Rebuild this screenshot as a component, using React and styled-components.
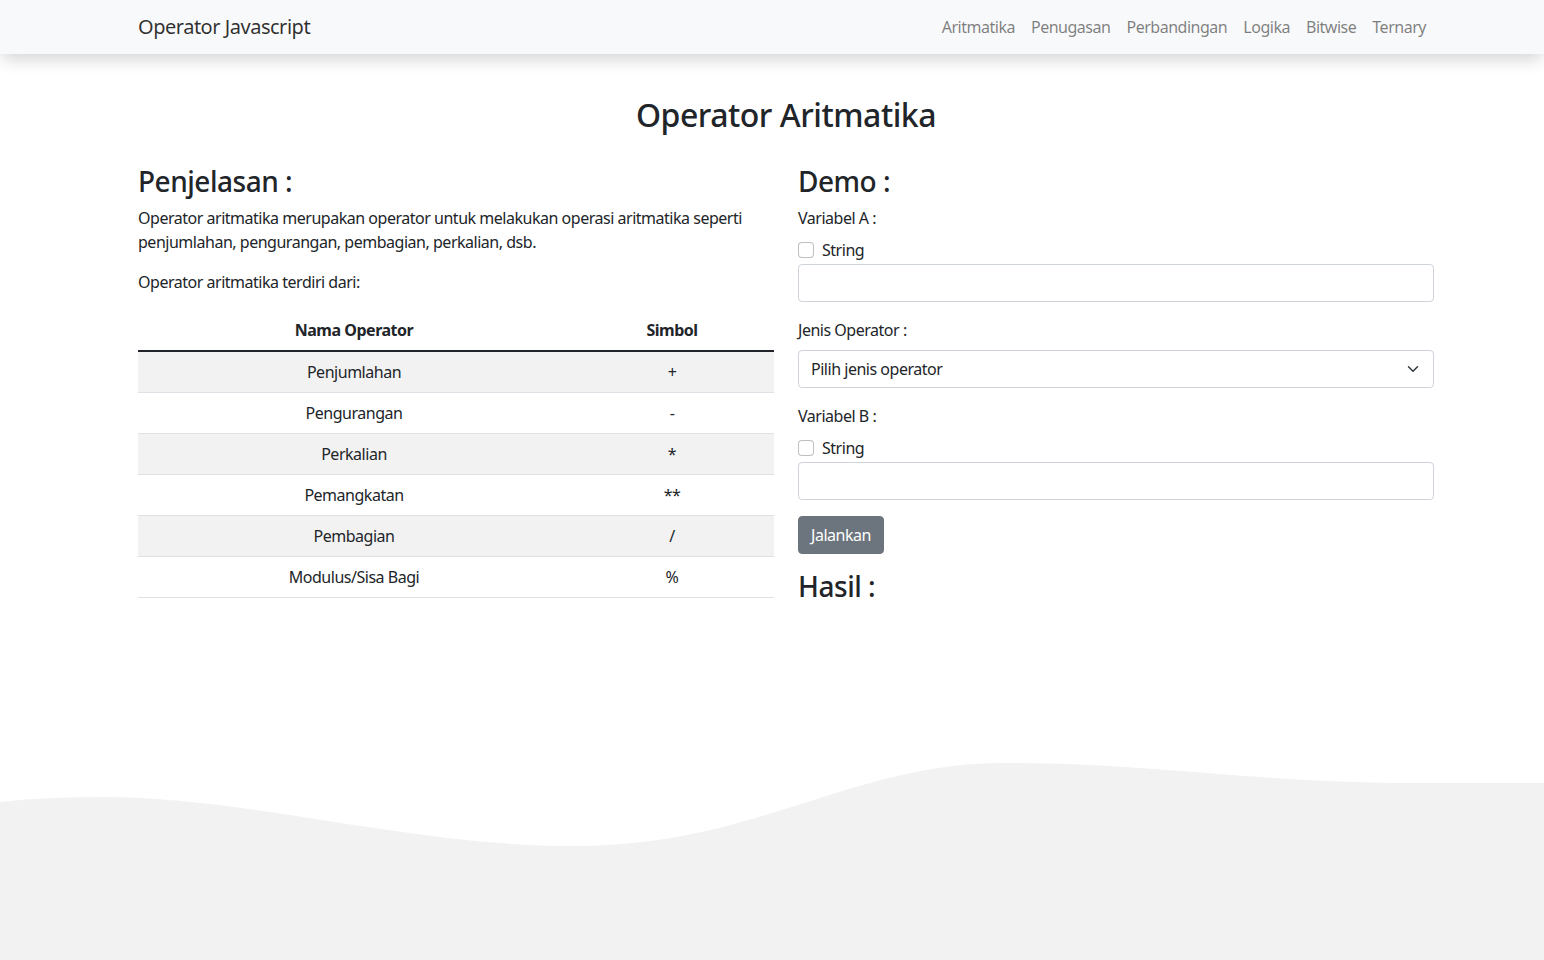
import React from "react";
import styled, { createGlobalStyle } from "styled-components";

const GlobalStyle = createGlobalStyle`
  * {
    box-sizing: border-box;
  }
  body {
    margin: 0;
    font-family: "Noto Sans", "Open Sans", sans-serif;
    font-size: 16px;
    line-height: 1.5;
    letter-spacing: -0.03em;
    color: #212529;
    background-color: #fff;
  }
`;

const Page = styled.div`
  min-height: 100vh;
  display: flex;
  flex-direction: column;
`;

const Container = styled.div`
  width: 1320px;
  padding: 0 12px;
  margin-left: calc(50% - 646px);
`;

// Navbar
const Navbar = styled.nav`
  height: 54px;
  background-color: #f8f9fa;
  box-shadow: 0 8px 16px -2px rgba(0, 0, 0, 0.16);
  position: relative;
  z-index: 1;
`;

const NavInner = styled(Container)`
  height: 100%;
  display: flex;
  align-items: center;
  justify-content: space-between;
`;

const Brand = styled.a`
  font-size: 20px;
  color: rgba(0, 0, 0, 0.82);
  text-decoration: none;
`;

const NavList = styled.ul`
  display: flex;
  list-style: none;
  margin: 0;
  padding: 0;
`;

const NavLink = styled.a`
  display: block;
  padding: 8px;
  font-size: 16px;
  color: rgba(0, 0, 0, 0.5);
  text-decoration: none;
`;

// Content
const Main = styled.main`
  flex: 1;
`;

const PageTitle = styled.h2`
  margin: 42px 0 31px;
  text-align: center;
  font-size: 32px;
  font-weight: 500;
  line-height: 1.2;
`;

const Row = styled.div`
  display: grid;
  grid-template-columns: 1fr 1fr;
  column-gap: 24px;
`;

const Column = styled.section``;

const Heading = styled.h3`
  margin: ${(props) => (props.top ? "16px" : "0")} 0 7px;
  font-size: 28px;
  font-weight: 500;
  line-height: 1.2;
`;

const Paragraph = styled.p`
  margin: 0 0 16px;
`;

const Table = styled.table`
  width: 100%;
  border-collapse: collapse;
  text-align: center;
`;

const HeadCell = styled.th`
  width: ${(props) => props.w};
  padding: 8px;
  font-weight: 700;
  border-bottom: 2px solid #212529;
`;

const BodyRow = styled.tr`
  &:nth-child(odd) {
    background-color: #f2f2f2;
  }
`;

const BodyCell = styled.td`
  padding: 8px;
  border-bottom: 1px solid #dee2e6;
`;

const Label = styled.label`
  display: block;
  margin-bottom: 8px;
`;

const Field = styled.div`
  margin-bottom: 16px;
`;

const Check = styled.label`
  display: flex;
  align-items: center;
  gap: 8px;
  min-height: 24px;
  margin-bottom: 2px;
`;

const CheckBox = styled.input`
  appearance: none;
  width: 16px;
  height: 16px;
  margin: 0;
  border: 1px solid rgba(0, 0, 0, 0.25);
  border-radius: 4px;
  background-color: #fff;
`;

const TextInput = styled.input`
  display: block;
  width: 100%;
  height: 38px;
  padding: 6px 12px;
  font: inherit;
  color: #212529;
  border: 1px solid #ced4da;
  border-radius: 4px;
  outline: none;
`;

const Select = styled.select`
  display: block;
  width: 100%;
  height: 38px;
  padding: 6px 36px 6px 12px;
  font: inherit;
  letter-spacing: inherit;
  color: #212529;
  border: 1px solid #ced4da;
  border-radius: 4px;
  appearance: none;
  outline: none;
  background-color: #fff;
  background-image: url("data:image/svg+xml,%3csvg xmlns='http://www.w3.org/2000/svg' viewBox='0 0 16 16'%3e%3cpath fill='none' stroke='%23343a40' stroke-linecap='round' stroke-linejoin='round' stroke-width='2' d='M2 5l6 6 6-6'/%3e%3c/svg%3e");
  background-repeat: no-repeat;
  background-position: right 12px center;
  background-size: 16px 12px;
`;

const Button = styled.button`
  padding: 6px 12px;
  height: 38px;
  font: inherit;
  letter-spacing: inherit;
  color: #fff;
  background-color: #6c757d;
  border: 1px solid #6c757d;
  border-radius: 4px;
`;

// Wave footer
const Wave = styled.svg`
  display: block;
  width: 100%;
  height: 200px;
`;

const operators = [
  ["Penjumlahan", "+"],
  ["Pengurangan", "-"],
  ["Perkalian", "*"],
  ["Pemangkatan", "**"],
  ["Pembagian", "/"],
  ["Modulus/Sisa Bagi", "%"],
];

const links = ["Aritmatika", "Penugasan", "Perbandingan", "Logika", "Bitwise", "Ternary"];

const App = () => {
  return (
    <Page>
      <GlobalStyle />
      <Navbar>
        <NavInner>
          <Brand href="#">Operator Javascript</Brand>
          <NavList>
            {links.map((l) => (
              <li key={l}>
                <NavLink href="#">{l}</NavLink>
              </li>
            ))}
          </NavList>
        </NavInner>
      </Navbar>

      <Main>
        <Container>
          <PageTitle>Operator Aritmatika</PageTitle>
          <Row>
            <Column>
              <Heading>Penjelasan :</Heading>
              <Paragraph>
                Operator aritmatika merupakan operator untuk melakukan operasi aritmatika seperti
                penjumlahan, pengurangan, pembagian, perkalian, dsb.
              </Paragraph>
              <Paragraph>Operator aritmatika terdiri dari:</Paragraph>
              <Table>
                <thead>
                  <tr>
                    <HeadCell w="432px">Nama Operator</HeadCell>
                    <HeadCell w="204px">Simbol</HeadCell>
                  </tr>
                </thead>
                <tbody>
                  {operators.map(([name, sym]) => (
                    <BodyRow key={name}>
                      <BodyCell>{name}</BodyCell>
                      <BodyCell>{sym}</BodyCell>
                    </BodyRow>
                  ))}
                </tbody>
              </Table>
            </Column>

            <Column>
              <Heading>Demo :</Heading>
              <Field>
                <Label>Variabel A :</Label>
                <Check>
                  <CheckBox type="checkbox" />
                  String
                </Check>
                <TextInput type="text" />
              </Field>
              <Field>
                <Label>Jenis Operator :</Label>
                <Select defaultValue="">
                  <option value="">Pilih jenis operator</option>
                </Select>
              </Field>
              <Field>
                <Label>Variabel B :</Label>
                <Check>
                  <CheckBox type="checkbox" />
                  String
                </Check>
                <TextInput type="text" />
              </Field>
              <Button type="button">Jalankan</Button>
              <Heading top>Hasil :</Heading>
            </Column>
          </Row>
        </Container>
      </Main>

      <Wave viewBox="0 0 1544 200" preserveAspectRatio="none">
        <path
          fill="#f2f2f2"
          d="M0,42 C35,38 70,37 105,37 C250,37 420,88 580,86 C760,84 850,3 1005,3 C1150,3 1250,22 1400,23 L1544,23 L1544,200 L0,200 Z"
        />
      </Wave>
    </Page>
  );
};

export default App;
